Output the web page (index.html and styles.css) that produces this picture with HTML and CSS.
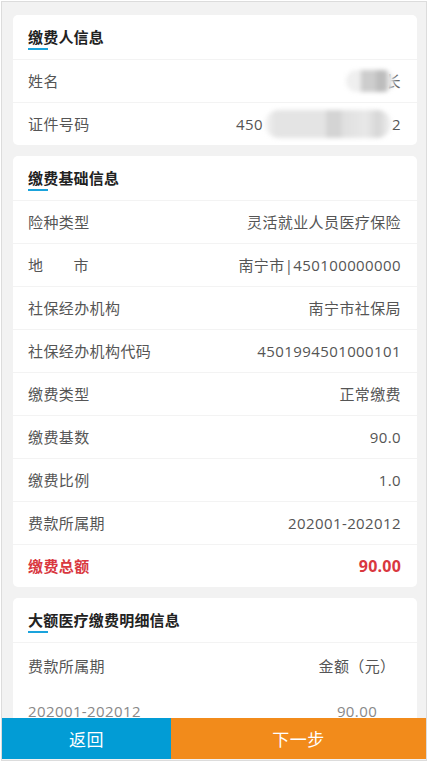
FILE: index.html
```html
<!DOCTYPE html>
<html lang="zh-CN">
<head>
<meta charset="utf-8">
<title>缴费信息</title>
<link rel="stylesheet" href="styles.css">
</head>
<body>
<div class="frame">
  <div class="content">
    <section class="card">
      <div class="card-head">
        <div class="card-title">缴费人信息</div>
        <div class="title-bar"></div>
      </div>
      <div class="row">
        <span class="label">姓名</span>
        <span class="value"><span class="blur blur-name"></span><span class="tail">长</span></span>
      </div>
      <div class="row last">
        <span class="label">证件号码</span>
        <span class="value">450<span class="blur blur-id"></span>2</span>
      </div>
    </section>

    <section class="card">
      <div class="card-head">
        <div class="card-title">缴费基础信息</div>
        <div class="title-bar"></div>
      </div>
      <div class="row"><span class="label">险种类型</span><span class="value">灵活就业人员医疗保险</span></div>
      <div class="row"><span class="label">地<span class="gap"></span>市</span><span class="value">南宁市|450100000000</span></div>
      <div class="row"><span class="label">社保经办机构</span><span class="value">南宁市社保局</span></div>
      <div class="row"><span class="label">社保经办机构代码</span><span class="value">4501994501000101</span></div>
      <div class="row"><span class="label">缴费类型</span><span class="value">正常缴费</span></div>
      <div class="row"><span class="label">缴费基数</span><span class="value">90.0</span></div>
      <div class="row"><span class="label">缴费比例</span><span class="value">1.0</span></div>
      <div class="row"><span class="label">费款所属期</span><span class="value">202001-202012</span></div>
      <div class="row last total"><span class="label">缴费总额</span><span class="value">90.00</span></div>
    </section>

    <section class="card">
      <div class="card-head">
        <div class="card-title">大额医疗缴费明细信息</div>
        <div class="title-bar"></div>
      </div>
      <div class="table-row head">
        <span class="col-period">费款所属期</span>
        <span class="col-amount">金额（元）</span>
      </div>
      <div class="table-row data">
        <span class="col-period">202001-202012</span>
        <span class="col-amount">90.00</span>
      </div>
    </section>
  </div>

  <div class="footer">
    <button class="btn btn-back">返回</button>
    <button class="btn btn-next">下一步</button>
  </div>
</div>
</body>
</html>
```

FILE: styles.css
```css
html, body {
  margin: 0;
  padding: 0;
  background: #ffffff;
}

body {
  font-family: "Open Sans", "Noto Sans CJK SC", sans-serif;
  font-size: 15px;
  letter-spacing: 0.4px;
  color: #555555;
}

.frame {
  position: relative;
  margin: 1px 4px 0 1px;
  height: 760px;
  box-sizing: border-box;
  border: 1px solid #dcdcdc;
  background: #f2f2f2;
  overflow: hidden;
}

.content {
  padding: 13px 9px 0 11px;
  display: flex;
  flex-direction: column;
  gap: 11px;
}

.card {
  background: #ffffff;
  border-radius: 5px;
  overflow: hidden;
}

.card-head {
  padding: 12px 15px 9px;
  border-bottom: 1px solid #f3f3f3;
}

.card-title {
  font-size: 15px;
  line-height: 20px;
  font-weight: bold;
  color: #222222;
  letter-spacing: 0.2px;
}

.title-bar {
  margin-top: 1px;
  width: 20px;
  height: 2px;
  background: #1aa3dc;
}

.row {
  height: 42px;
  display: flex;
  align-items: center;
  justify-content: space-between;
  padding: 0 16px 0 15px;
  border-bottom: 1px solid #f3f3f3;
  line-height: 20px;
}

.row.last {
  border-bottom: none;
}

.label {
  color: #555555;
  display: flex;
  align-items: center;
}

.gap {
  display: inline-block;
  width: 30px;
}

.value {
  color: #555555;
  display: flex;
  align-items: center;
}

.total .label {
  color: #d9383f;
  font-weight: bold;
}

.total .value {
  color: #d9383f;
  font-weight: bold;
  font-size: 16px;
  letter-spacing: 0.2px;
}

.blur {
  display: inline-block;
  filter: blur(2px);
  position: relative;
  z-index: 1;
}

.blur-name {
  width: 48px;
  height: 22px;
  border-radius: 11px;
  margin-right: -8px;
  background: linear-gradient(90deg, #efefef 0%, #efefef 30%, #cdcdcd 31%, #cdcdcd 62%, #bdbdbd 63%, #bdbdbd 85%, #e8e8e8 86%);
}

.tail {
  color: #666666;
}

.blur-id {
  width: 126px;
  height: 28px;
  border-radius: 14px;
  margin: 0 1px 0 2px;
  background: linear-gradient(90deg, #f4f4f4 0%, #e4e4e4 8%, #e4e4e4 48%, #d4d4d4 49%, #d4d4d4 60%, #dfdfdf 61%, #e8e8e8 80%, #d6d6d6 90%, #f2f2f2 100%);
}

.table-row {
  display: flex;
  align-items: center;
  height: 45px;
  padding: 0 14px 0 15px;
  line-height: 20px;
}

.table-row.head {
  color: #555555;
}

.table-row.data {
  color: #888888;
}

.col-period {
  flex: 1;
}

.col-amount {
  width: 92px;
  text-align: center;
}

.footer {
  position: absolute;
  left: 0;
  right: 0;
  bottom: 1px;
  height: 41px;
  display: flex;
}

.btn {
  border: none;
  margin: 0;
  padding: 0;
  height: 41px;
  color: #ffffff;
  font-family: "Noto Sans CJK SC", "Noto Sans", sans-serif;
  font-size: 17px;
  letter-spacing: 0.5px;
  cursor: pointer;
}

.btn-back {
  width: 169px;
  background: #029cd5;
}

.btn-next {
  flex: 1;
  background: #f28b1b;
}
```
